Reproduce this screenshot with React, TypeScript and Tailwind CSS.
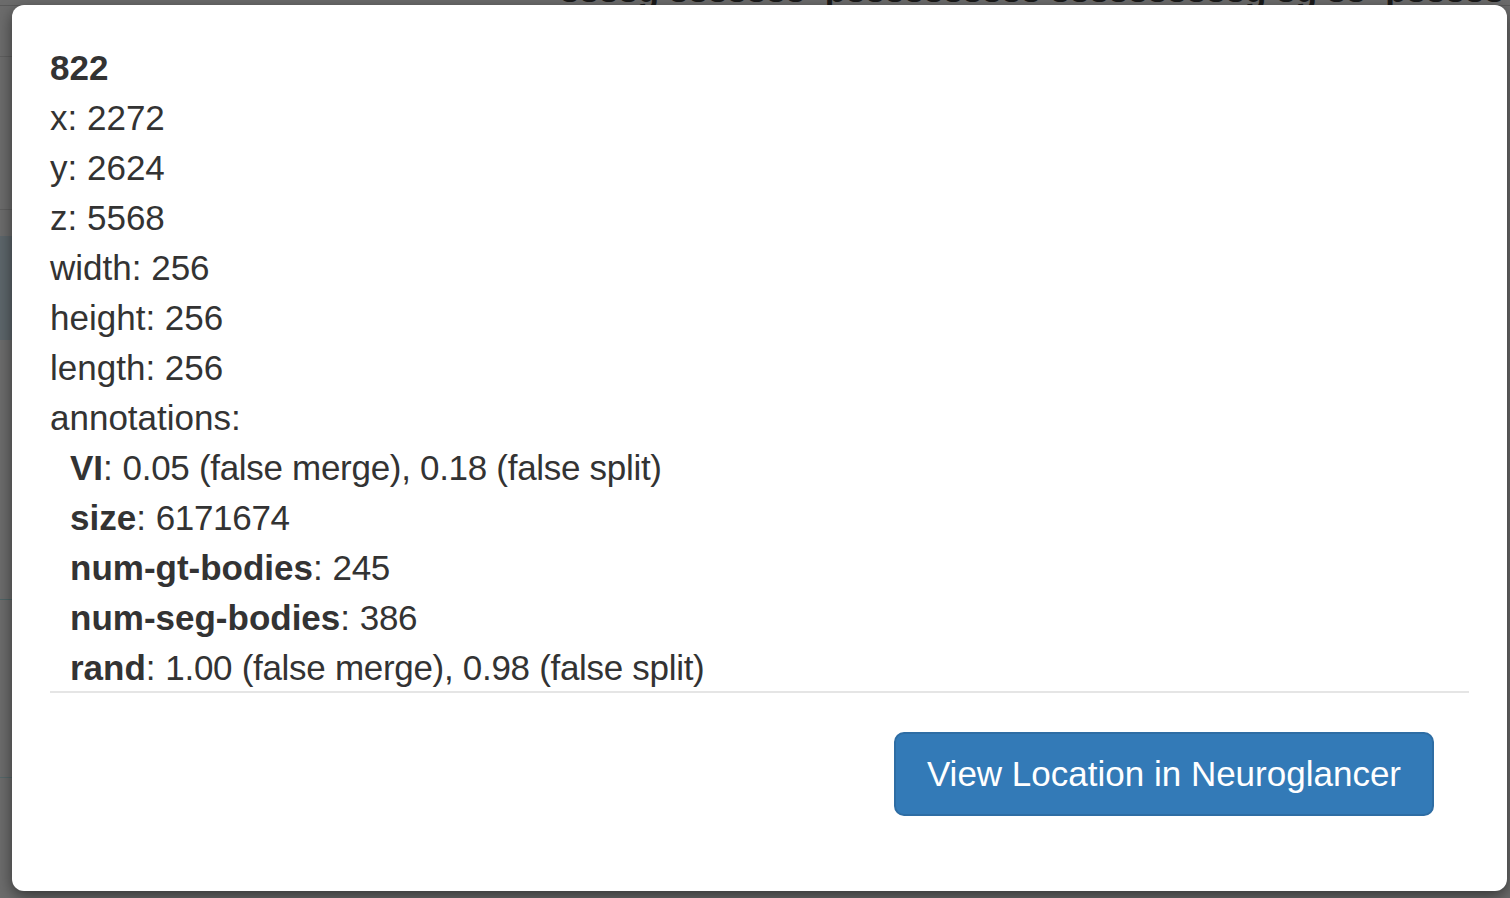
import React from "react";

const fields: [string, string][] = [
  ["x", "2272"],
  ["y", "2624"],
  ["z", "5568"],
  ["width", "256"],
  ["height", "256"],
  ["length", "256"],
];

const annotations: [string, string][] = [
  ["VI", "0.05 (false merge), 0.18 (false split)"],
  ["size", "6171674"],
  ["num-gt-bodies", "245"],
  ["num-seg-bodies", "386"],
  ["rand", "1.00 (false merge), 0.98 (false split)"],
];

export default function App() {
  return (
    <div
      className="relative h-[898px] w-[1510px] overflow-hidden bg-[#6c6c6c]"
      style={{ fontFamily: '"Liberation Sans", Arial, sans-serif' }}>
      {/* page behind the backdrop */}
      <div className="flex h-full flex-col">
        <div className="h-[6px] shrink-0 overflow-hidden border-b border-[#5a5a5a]">
          <div className="-mt-[30px] whitespace-nowrap pl-[560px] text-[35px] font-bold leading-[40px] text-[#1a1a1a]">
            ssssg sssssss_pssssssssss ssssssssssg sg ss_psssss
          </div>
        </div>
        <div className="flex w-[12px] flex-col">
          <div className="h-[51px] border-b border-[#5f5f5f]" />
          <div className="h-[153px] border-b border-[#5f5f5f]" />
          <div className="mt-[26px] h-[104px] bg-[#5d666b]" />
          <div className="h-[260px] border-b border-[#4f6466]" />
          <div className="h-[178px] border-b border-[#55686a]" />
        </div>
      </div>

      {/* modal over the backdrop */}
      <div className="absolute left-[12px] top-[5px] flex h-[886px] w-[1495px] flex-col rounded-[12px] bg-white text-[#333333] shadow-[0_5px_15px_rgba(0,0,0,0.5)]">
        <div className="px-[38px] pt-[38px] text-[35px] leading-[50px]">
          <div className="font-bold">822</div>
          {fields.map(([k, v]) => (
            <div key={k}>
              {k}: {v}
            </div>
          ))}
          <div>annotations:</div>
          <div className="pl-[20px]">
            {annotations.map(([k, v]) => (
              <div key={k}>
                <span className="font-bold">{k}</span>:{" "}
                <span className="tracking-[-0.3px]">{v}</span>
              </div>
            ))}
          </div>
          <div className="-mt-[2px] h-[2px] bg-[#e5e5e5]" />
        </div>
        <div className="flex justify-end pr-[73px] pt-[39px]">
          <button className="h-[84px] rounded-[10px] border-2 border-[#2e6da4] bg-[#337ab7] px-[31px] text-[35px] leading-[50px] text-white">
            View Location in Neuroglancer
          </button>
        </div>
      </div>
    </div>
  );
}
